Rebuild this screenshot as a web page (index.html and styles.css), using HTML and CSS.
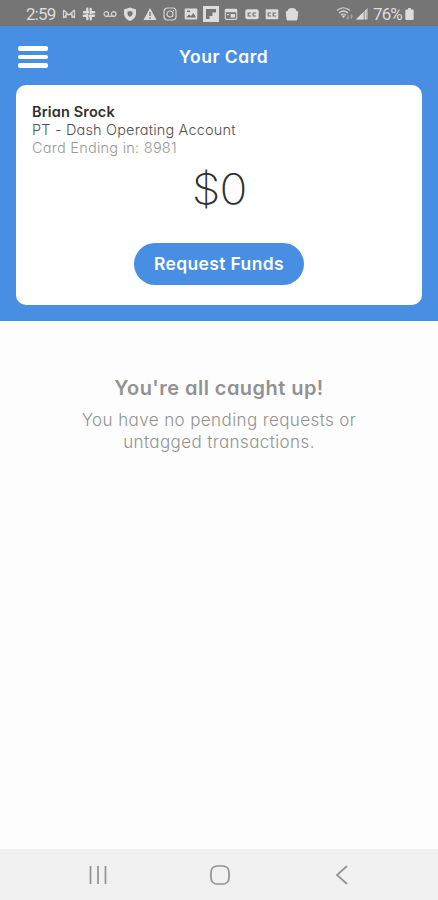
FILE: index.html
```html
<!DOCTYPE html>
<html lang="en">
<head>
<meta charset="utf-8">
<meta name="viewport" content="width=device-width, initial-scale=1">
<title>Your Card</title>
<link rel="stylesheet" href="styles.css">
</head>
<body>
<div class="status">
  <span class="clock">2:59</span>
  <div class="notices">
    <svg viewBox="0 0 14 14"><path class="line" d="M1.500 3v8M12.500 3v8M1.500 3l5.500 5 5.500-5M1.500 11l4-4M12.500 11l-4-4M4 5v6M10 5v6"/></svg>
    <svg viewBox="0 0 14 14"><path class="thick" d="M5.300 1.800v3.400M8.700 2v4M12.200 5.300H9M12 8.700H8M8.700 12.200V9M5.300 12V8M1.800 8.700H5M2 5.300h4"/></svg>
    <svg viewBox="0 0 14 14"><g class="line"><circle cx="3.300" cy="7" r="2.300"/><circle cx="10.700" cy="7" r="2.300"/><path d="M3.300 9.300h7.400"/></g></svg>
    <svg viewBox="0 0 14 14"><path d="M7 .5l6 2v4c0 3.500-2.500 6-6 7.500-3.500-1.500-6-4-6-7.500v-4z"/><path class="cut" d="M7 4l2.500.8v2c0 1.300-1 2.300-2.500 3.200-1.500-.9-2.500-1.900-2.500-3.200v-2z"/></svg>
    <svg viewBox="0 0 14 14"><path d="M7 1l6.500 12H.5z"/><path class="cut" d="M6.300 5h1.400v4H6.300zM6.300 10.300h1.400v1.400H6.300z"/></svg>
    <svg viewBox="0 0 14 14"><g class="line"><rect x="1" y="1" width="12" height="12" rx="3.500"/><circle cx="7" cy="7" r="3"/><path d="M10 3.700h1"/></g></svg>
    <svg viewBox="0 0 14 14"><rect x=".7" y="1.500" width="12.600" height="11" rx="1"/><path class="cut" d="M2 10.500l3-3 2 1.500 2.500-3 2.500 4.500zM3 3.500h3V5H3z"/></svg>
    <svg class="large" viewBox="0 0 16 16"><path d="M0 0h16v16H0z"/><path class="cut" d="M3 3h10v3.500H9.500V10H6.500v3H3z"/></svg>
    <svg viewBox="0 0 14 14"><rect class="line" x="1.300" y="2.300" width="11.400" height="10" rx="1"/><path d="M1 2h12v3.200H1zM6.500 7H11v3.500H6.500zM3 7h2v1.300H3z"/></svg>
    <svg viewBox="0 0 14 14"><rect x=".3" y="2.300" width="13.400" height="10" rx="2"/><path class="cutline" d="M6 6H3.200v3H6M11 6H8.200v3H11"/></svg>
    <svg viewBox="0 0 14 14"><rect x=".7" y="2.300" width="12.600" height="10" rx="1"/><path class="cutline" d="M6 6H3.200v3H6M11 6H8.200v3H11"/></svg>
    <svg viewBox="0 0 14 14"><path d="M2.500 4Q3 1 7 1t4.500 3l1.800.5-.8 7.500q-.3 1.500-1.500 1.500H3Q1.700 13.500 1.500 12L.7 4.500z"/></svg>
  </div>
  <div class="signals">
    <svg class="wifi" viewBox="0 0 18 15"><g class="line"><path d="M1 4.500q6.500-5.500 13 0M3 7q4.500-4 9 0M5 9q2.500-2 5 0"/><path class="faintline" d="M12 9v4M10.800 11.500L12 13l1.200-1.500M15.500 13V9M14.300 10.500L15.500 9l1.200 1.500"/></g><path d="M5.500 9.500h4l-2 2.500z"/></svg>
    <svg class="cell" viewBox="0 0 13 13"><path class="faint" d="M13 0v13H0z"/><path d="M8 5v8H0zM10 3v10h1.200V2z"/></svg>
    <span class="percent">76%</span>
    <svg class="battery" viewBox="0 0 9 13"><path d="M3 0h3v1.500h2q1 0 1 1V12q0 1-1 1H1q-1 0-1-1V2.500q0-1 1-1h2z"/></svg>
  </div>
</div>
<header class="hero">
  <div class="topbar">
    <div class="menu"><i></i><i></i><i></i></div>
    <h1>Your Card</h1>
  </div>
  <section class="card">
    <div class="name">Brian Srock</div>
    <div class="account">PT - Dash Operating Account</div>
    <div class="ending">Card Ending in: 8981</div>
    <div class="balance">$0</div>
    <button class="request">Request Funds</button>
  </section>
</header>
<main class="empty">
  <h2>You're all caught up!</h2>
  <p>You have no pending requests or<br>untagged transactions.</p>
</main>
<nav class="navbar">
  <svg viewBox="0 0 20 20"><path d="M2.500 1v18M10 1v18M17.500 1v18"/></svg>
  <svg viewBox="0 0 20 20"><rect x="1" y="1" width="18" height="18" rx="6"/></svg>
  <svg viewBox="0 0 20 20"><path d="M15 1L5 10l10 9"/></svg>
</nav>
</body>
</html>
```

FILE: styles.css
```css
* { box-sizing: border-box; }
body {
  margin: 0;
  height: 900px;
  display: flex;
  flex-direction: column;
  overflow: hidden;
  background: #fdfdfd;
  font-family: Inter, "Open Sans", sans-serif;
  font-feature-settings: "cv11";
}
svg { display: block; flex: none; }
.status {
  height: 26px;
  padding: 1px 24px 0 26px;
  display: flex;
  align-items: center;
  background: #757575;
  color: #dcdcdc;
  fill: #dcdcdc;
  font: 17px/26px Roboto, sans-serif;
}
.clock { width: 36px; letter-spacing: -0.8px; white-space: nowrap; }
.notices { display: flex; align-items: center; gap: 6.3px; }
.notices svg { width: 14px; height: 14px; }
.notices .large { width: 16px; height: 16px; margin: 0 -1px; }
.line { fill: none; stroke: #d4d4d4; stroke-width: 1.2; }
.thick { fill: none; stroke: #dcdcdc; stroke-width: 2.4; stroke-linecap: round; }
.cut { fill: #757575; }
.cutline { fill: none; stroke: #757575; stroke-width: 1.2; }
.faint { fill: #a8a8a8; }
.faintline { stroke: #a0a0a0; }
.signals { display: flex; align-items: center; margin-left: auto; }
.wifi { width: 18px; height: 15px; margin-right: 2px; }
.cell { width: 12px; height: 13px; margin-right: 5px; }
.percent { width: 31px; letter-spacing: -0.9px; }
.battery { width: 9px; height: 12px; margin-left: 1px; }
.hero { height: 295px; padding: 0 16px 16px; background: #488fe3; }
.topbar { height: 59px; display: flex; align-items: center; padding: 3px 0 0 2px; }
.menu { width: 30px; display: flex; flex-direction: column; gap: 4px; }
.menu i { height: 4.500px; border-radius: 2px; background: #fff; }
h1 {
  flex: 1;
  margin: 0 23px 0 0;
  text-align: center;
  color: #fff;
  font-size: 17.500px;
  line-height: 24px;
  font-weight: 600;
  letter-spacing: 0.5px;
}
.card {
  height: 220px;
  padding: 18px 16px 0;
  border-radius: 10px;
  background: #fff;
  display: flex;
  flex-direction: column;
  color: #303030;
  font-size: 14.500px;
  line-height: 18px;
}
.name { font-weight: 600; letter-spacing: 0.15px; }
.account { color: #505050; font-weight: 300; letter-spacing: 0.17px; }
.ending { color: #999; font-weight: 300; letter-spacing: 0.25px; }
.balance {
  margin-top: 7px;
  text-align: center;
  font-size: 42px;
  line-height: 50px;
  font-weight: 200;
  letter-spacing: -1px;
  transform: scaleX(1.1);
}
.request {
  align-self: center;
  width: 170px;
  height: 42px;
  margin-top: 29px;
  padding: 0;
  border: 0;
  border-radius: 21px;
  background: #488fe3;
  color: #fff;
  font: 600 17.500px/42px Inter, sans-serif;
  font-feature-settings: "cv11";
  letter-spacing: 0.35px;
}
.empty { flex: 1; padding-top: 54px; text-align: center; color: #929292; }
h2 { margin: 0; font-size: 20px; line-height: 27px; font-weight: 600; letter-spacing: 0.45px; }
p { margin: 7px 0 0; font-size: 17px; line-height: 22px; font-weight: 300; letter-spacing: 0.4px; color: #929292; }
.navbar {
  height: 51px;
  padding: 1px 86px 0 88px;
  display: flex;
  align-items: center;
  justify-content: space-between;
  background: #f1f1f1;
}
.navbar svg { width: 20px; height: 20px; fill: none; stroke: #929292; stroke-width: 1.700; }
```
